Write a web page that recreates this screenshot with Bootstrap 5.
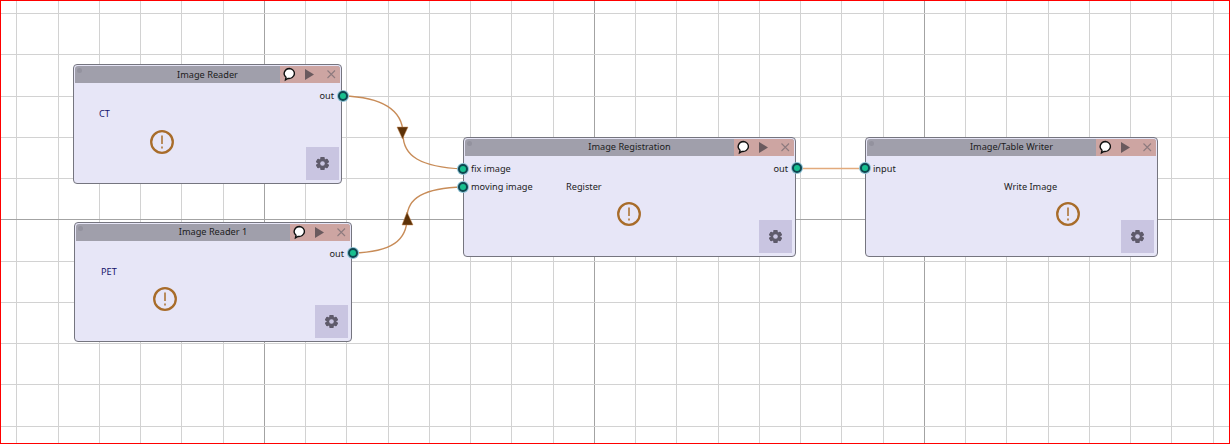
<!DOCTYPE html>
<html lang="en">
<head>
    <meta charset="UTF-8">
    <title>Pipeline Editor</title>
    <link href="https://cdn.jsdelivr.net/npm/bootstrap@5.3.0/dist/css/bootstrap.min.css" rel="stylesheet">
    <style>
        html, body { margin: 0; height: 100%; overflow: hidden; background: #fff; }
        .scene { position: relative; width: 1230px; height: 444px; border: 1px solid #f00; overflow: hidden; font-family: "Noto Sans", "Open Sans", sans-serif; font-size: 9.2px; color: #1c1c1c; }
        .layer { position: absolute; left: -1px; top: -1px; width: 1230px; height: 444px; }
        .block { position: absolute; height: 120px; background: #e7e6f7; border: 1px solid #75757f; border-radius: 4px; padding: 1px; }
        .block-a { left: 72px; top: 63px; width: 269px; }
        .block-b { left: 73px; top: 221px; width: 278px; }
        .block-c { left: 462px; top: 136px; width: 333px; }
        .block-d { left: 864px; top: 136px; width: 293px; }
        .head { position: relative; height: 17px; background: #a09fab; border-radius: 3px 3px 0 0; }
        .head-title { position: absolute; inset: 0; line-height: 16px; text-align: center; }
        .block-a .head-title { line-height: 18px; }
        .head-dot { position: absolute; left: 2px; top: 2px; width: 5px; height: 5px; border-radius: 50%; background: #93929e; }
        .head-tools { position: absolute; right: 0; top: 0; width: 60px; height: 17px; background: #cda5a2; border-radius: 0 3px 0 0; }
        .head-tools svg { display: block; }
        .port-row { height: 18px; line-height: 18px; padding: 0 6px; margin-top: 4px; }
        .port-row + .port-row { margin-top: 0; }
        .port { position: absolute; width: 10px; height: 10px; border-radius: 50%; background: #17c08f; border: 2px solid #0d4650; box-shadow: 0 0 0 1px #8cc0d2; }
        .port-a { left: 337px; top: 90px; }
        .port-b { left: 347px; top: 247px; }
        .port-c { left: 457px; top: 163px; }
        .port-d { left: 457px; top: 181px; }
        .port-e { left: 791px; top: 162px; }
        .port-f { left: 859px; top: 162px; }
        .block-note { position: absolute; top: 42px; }
        .note-a { left: 25px; color: #14146a; }
        .note-b { left: 26px; color: #14146a; }
        .note-c { left: 102px; }
        .note-d { left: 138px; }
        .warn { position: absolute; top: 63px; width: 26px; height: 26px; }
        .warn-a { left: 75px; top: 64px; }
        .warn-b { left: 77px; }
        .warn-c { left: 152px; }
        .warn-d { left: 189px; }
        .gear-box { position: absolute; right: 3px; bottom: 3px; width: 33px; height: 33px; background: #c9c5e1; }
        .block-a .gear-box { right: 2px; }
    </style>
</head>
<body>
    <div class="scene">
        <!-- Grid -->
        <svg class="layer" width="1230" height="444" id="gridLayer"></svg>

        <!-- Connections -->
        <svg class="layer" width="1230" height="444">
            <g fill="none" stroke="#c88c58" stroke-width="1.4">
                <path d="M343 96 C 382 97 403 110 403 134 C 403 156 420 167 463 169"/>
                <path d="M353 253 C 392 252 407 240 407 218 C 407 198 424 188 463 187"/>
                <path d="M796 168.500 H865" stroke="#e2aa7c" stroke-width="1.600"/>
            </g>
            <path d="M397 127 H408 L402.500 139 Z" fill="#5d3208" stroke="#c88c58" stroke-width="0.500"/>
            <path d="M407 212 L413 225 H402 Z" fill="#5d3208" stroke="#c88c58" stroke-width="0.500"/>
        </svg>

        <!-- Nodes -->
        <div class="block block-a">
            <div class="head">
                <div class="head-dot"></div>
                <div class="head-title">Image Reader</div>
                <div class="head-tools" data-tools></div>
            </div>
            <div class="port-row text-end">out</div>
            <div class="block-note note-a">CT</div>
            <svg class="warn warn-a" viewBox="0 0 26 26" data-warn></svg>
            <div class="gear-box" data-gear></div>
        </div>

        <div class="block block-b">
            <div class="head">
                <div class="head-dot"></div>
                <div class="head-title">Image Reader 1</div>
                <div class="head-tools" data-tools></div>
            </div>
            <div class="port-row text-end">out</div>
            <div class="block-note note-b">PET</div>
            <svg class="warn warn-b" viewBox="0 0 26 26" data-warn></svg>
            <div class="gear-box" data-gear></div>
        </div>

        <div class="block block-c">
            <div class="head">
                <div class="head-dot"></div>
                <div class="head-title">Image Registration</div>
                <div class="head-tools" data-tools></div>
            </div>
            <div class="d-flex justify-content-between">
                <div>
                    <div class="port-row">fix image</div>
                    <div class="port-row">moving image</div>
                </div>
                <div class="port-row">out</div>
            </div>
            <div class="block-note note-c">Register</div>
            <svg class="warn warn-c" viewBox="0 0 26 26" data-warn></svg>
            <div class="gear-box" data-gear></div>
        </div>

        <div class="block block-d">
            <div class="head">
                <div class="head-dot"></div>
                <div class="head-title">Image/Table Writer</div>
                <div class="head-tools" data-tools></div>
            </div>
            <div class="port-row">input</div>
            <div class="block-note note-d">Write Image</div>
            <svg class="warn warn-d" viewBox="0 0 26 26" data-warn></svg>
            <div class="gear-box" data-gear></div>
        </div>

        <!-- Ports -->
        <div class="port port-a"></div>
        <div class="port port-b"></div>
        <div class="port port-c"></div>
        <div class="port port-d"></div>
        <div class="port port-e"></div>
        <div class="port port-f"></div>
    </div>

    <script src="https://cdn.jsdelivr.net/npm/bootstrap@5.3.0/dist/js/bootstrap.bundle.min.js"></script>
    <script>
        // Grid lines, every 8th one is darker
        const step = 41.25;
        let lines = '';
        for (let i = 0; i < 31; i++) {
            const x = Math.floor(16.9 + i * step) + 0.5;
            const dark = i % 8 === 6;
            lines += `<path d="M${x} 0 V444" stroke="${dark ? '#a3a3a3' : '#d2d2d2'}"/>`;
        }
        for (let i = 0; i < 11; i++) {
            const y = Math.round(13 + i * step) + 0.5;
            const dark = i === 5;
            lines += `<path d="M0 ${y} H1230" stroke="${dark ? '#a3a3a3' : '#d2d2d2'}"/>`;
        }
        document.getElementById('gridLayer').innerHTML = lines;

        // Header buttons: comment, run, close
        document.querySelectorAll('[data-tools]').forEach(el => {
            el.innerHTML = `<svg width="60" height="17" viewBox="0 0 60 17">
                <path d="M9.500 2.500 a5.500 5 0 1 1 -1.500 9.900 l-2.500 1.400 l.5 -2.600 a5.500 5 0 0 1 3.500 -8.700 Z" fill="#fff" stroke="#111" stroke-width="1.400"/>
                <path d="M25 3 L34 8.500 L25 14 Z" fill="#6a5a5e"/>
                <path d="M47.500 4.500 L55 12 M55 4.500 L47.500 12" stroke="#8d7a7e" stroke-width="1.100" fill="none"/>
            </svg>`;
        });

        document.querySelectorAll('[data-warn]').forEach(el => {
            el.innerHTML = `<circle cx="13" cy="13" r="10.800" fill="none" stroke="#a86c2a" stroke-width="2.300"/>
                <path d="M13 6.500 V15" stroke="#a86c2a" stroke-width="1.500"/>
                <path d="M13 17.500 V19.500" stroke="#a86c2a" stroke-width="1.500"/>`;
        });

        document.querySelectorAll('[data-gear]').forEach(el => {
            let teeth = '';
            for (let a = 0; a < 6; a++) {
                teeth += `<rect x="14.500" y="10" width="4" height="13" rx="0.800" fill="#5f5b6b" transform="rotate(${a * 60} 16.500 16.500)"/>`;
            }
            el.innerHTML = `<svg width="33" height="33" viewBox="0 0 33 33">${teeth}
                <circle cx="16.500" cy="16.500" r="4.800" fill="#5f5b6b"/>
                <circle cx="16.500" cy="16.500" r="2.300" fill="#c9c5e1"/>
                </svg>`;
        });
    </script>
</body>
</html>
